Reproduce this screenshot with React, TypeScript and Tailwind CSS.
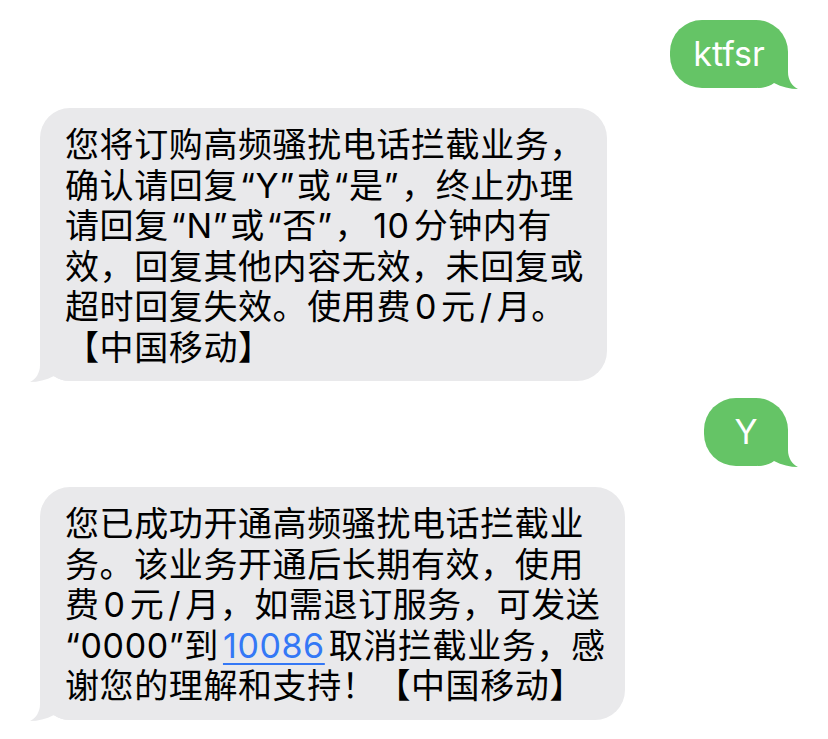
const font = "font-['Inter','Noto_Sans_CJK_SC',sans-serif]";

const TailRight = ({ color }: { color: string }) => (
  <svg
    className="absolute right-[-10px] bottom-[-1px]"
    width="40"
    height="33"
    viewBox="0 0 40 33"
  >
    <path
      d="M30 0 L30 16 C30 24 34 30 40 33 C32 33 24 31 16 27 C12 30 6 32 0 32 L0 0 Z"
      fill={color}
    />
  </svg>
);

const TailLeft = ({ color }: { color: string }) => (
  <svg
    className="absolute left-[-10px] bottom-[-1px] -scale-x-100"
    width="40"
    height="33"
    viewBox="0 0 40 33"
  >
    <path
      d="M30 0 L30 16 C30 24 34 30 40 33 C32 33 24 31 16 27 C12 30 6 32 0 32 L0 0 Z"
      fill={color}
    />
  </svg>
);

// latin run inside chinese text, with the small gap iOS puts around it
const L = ({ children }: { children: React.ReactNode }) => (
  <span className="mx-[4px]">{children}</span>
);

const Q = ({ children }: { children: React.ReactNode }) => (
  <span className="mx-[2px]">{children}</span>
);

const Sent = ({ text, width }: { text: string; width: string }) => (
  <div className="flex justify-end pr-[40px]">
    <div
      className={`relative h-[68px] ${width} rounded-[32px] bg-[#65c466] flex items-center justify-center`}
    >
      <span className="relative z-10 text-white text-[34px] leading-none">{text}</span>
      <TailRight color="#65c466" />
    </div>
  </div>
);

const Received = ({ lines, width }: { lines: React.ReactNode[]; width: string }) => (
  <div className="flex justify-start pl-[40px]">
    <div className={`relative ${width} rounded-[30px] bg-[#e9e9eb] pl-[25px] pt-[17px] pb-[13px]`}>
      <div className="relative z-10 text-black text-[34px] leading-[40.5px] tracking-[0.6px] whitespace-nowrap">
        {lines.map((l, i) => (
          <div key={i}>{l}</div>
        ))}
      </div>
      <TailLeft color="#e9e9eb" />
    </div>
  </div>
);

export default function App() {
  return (
    <div className={`w-[828px] h-[739px] bg-white overflow-hidden pt-[20px] ${font}`}>
      <Sent text="ktfsr" width="w-[118px]" />
      <div className="mt-[20px]">
        <Received
          width="w-[567px]"
          lines={[
            '您将订购高频骚扰电话拦截业务，',
            <>确认请回复<Q>“Y”</Q>或<Q>“是”</Q>，终止办理</>,
            <>请回复<Q>“N”</Q>或<Q>“否”</Q>，<L>10</L>分钟内有</>,
            '效，回复其他内容无效，未回复或',
            <>超时回复失效。使用费<L>0</L>元<L>/</L>月。</>,
            '【中国移动】',
          ]}
        />
      </div>
      <div className="mt-[17px]">
        <Sent text="Y" width="w-[84px]" />
      </div>
      <div className="mt-[21px]">
        <Received
          width="w-[585px]"
          lines={[
            '您已成功开通高频骚扰电话拦截业',
            '务。该业务开通后长期有效，使用',
            <>费<L>0</L>元<L>/</L>月，如需退订服务，可发送</>,
            <>
              “0000”到
              <L>
                <span className="text-[#3478f6] underline decoration-[2px] underline-offset-[5px]">10086</span>
              </L>
              取消拦截业务，感
            </>,
            '谢您的理解和支持！【中国移动】',
          ]}
        />
      </div>
    </div>
  );
}
